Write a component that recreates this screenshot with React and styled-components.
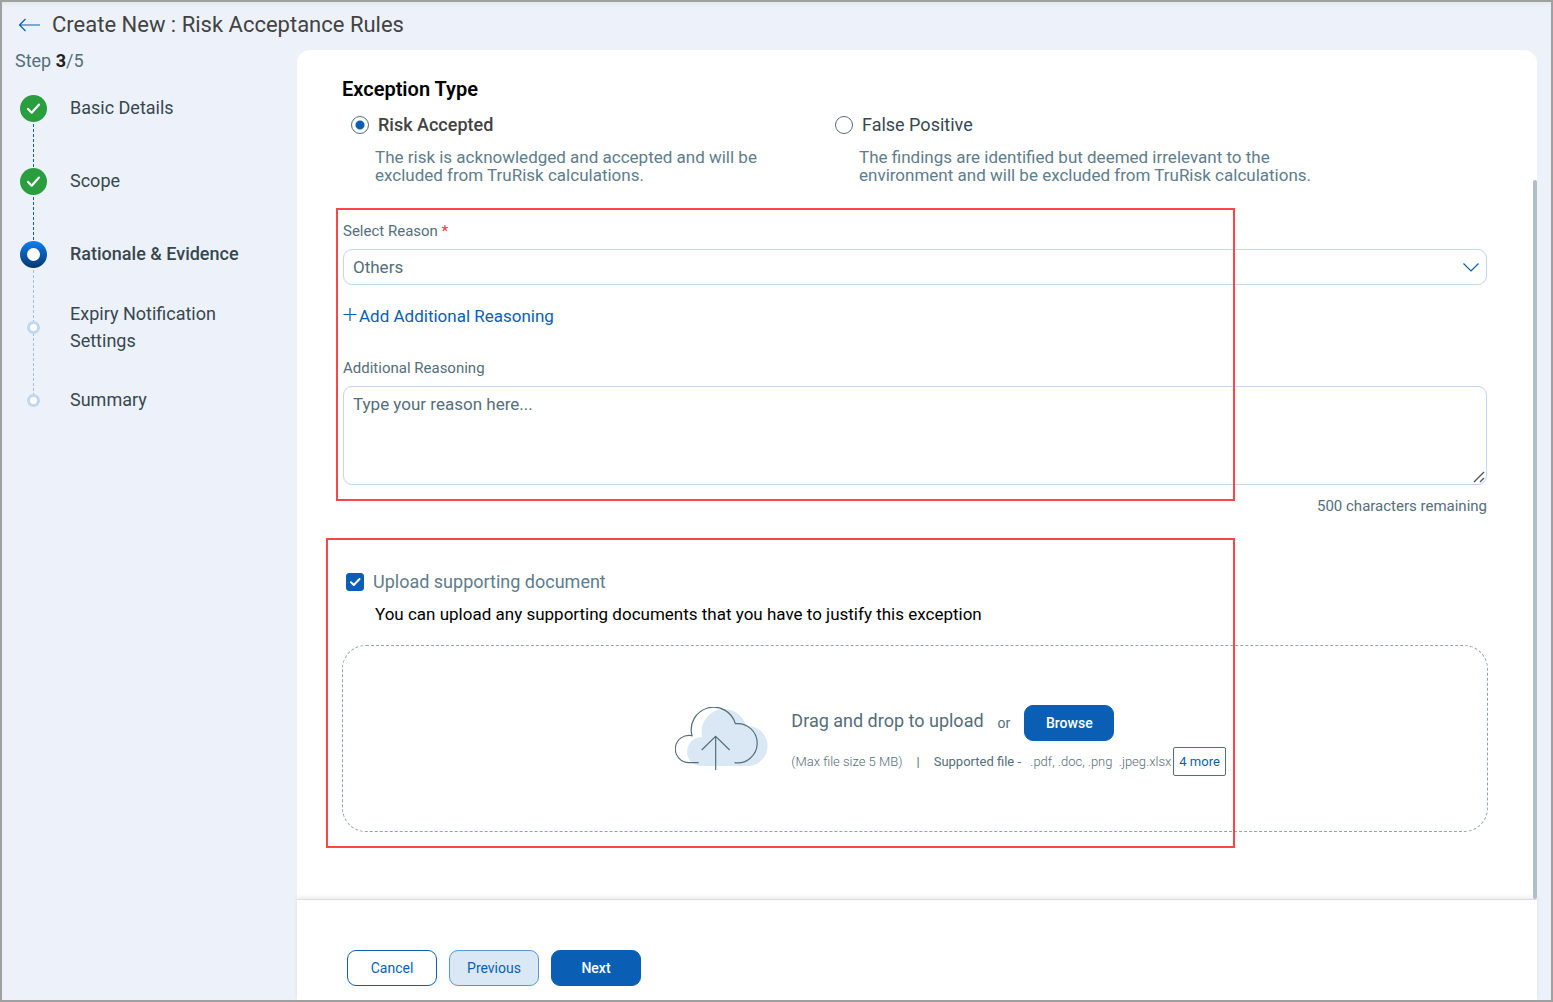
import { useState } from 'react'
import styled, { createGlobalStyle } from 'styled-components'

const colors = {
  blue: '#0a5fb4',
  paleBlue: '#dae7f4',
  line: '#c0d7ee',
  slate: '#546e7a',
  softSlate: '#607d8b',
  dark: '#37474f',
  page: '#edf2fa',
  red: '#ff4545',
}

const GlobalStyle = createGlobalStyle`
  * {
    box-sizing: border-box;
  }
  body {
    margin: 0;
    font-family: Roboto, 'Liberation Sans', sans-serif;
    background: ${colors.page};
  }
  button, input, select, textarea {
    font-family: inherit;
  }
`

const Page = styled.div`
  min-height: 100vh;
  display: flex;
  flex-direction: column;
  border: 2px solid #a0a0a0;
  background: ${colors.page};
  box-shadow: inset 0 4px 4px -2px #dfe8ea;
`

const Header = styled.header`
  height: 48px;
  padding: 0 16px 3px;
  display: flex;
  align-items: center;
  gap: 10px;
`

const BackButton = styled.button`
  display: flex;
  padding: 0;
  border: 0;
  background: none;
  cursor: pointer;
`

const Title = styled.h1`
  margin: 0;
  font-size: 22px;
  line-height: 28px;
  font-weight: 400;
  color: #424242;
`

const Body = styled.div`
  flex: 1;
  display: flex;
  padding-right: 14px;
`

const Sidebar = styled.aside`
  width: 295px;
  flex-shrink: 0;
`

const StepCount = styled.p`
  margin: 0;
  padding-left: 13px;
  font-size: 18px;
  line-height: 22px;
  color: ${colors.slate};

  strong {
    font-weight: 700;
    color: #212121;
  }
`

const Steps = styled.ol`
  margin: 0;
  padding: 23px 0 0 18px;
  list-style: none;
`

const Step = styled.li`
  position: relative;
  height: 27px;
  margin-bottom: 46px;
  display: flex;
  align-items: center;
  gap: 23px;

  &:not(:last-child)::before {
    content: '';
    position: absolute;
    left: 13px;
    top: 14px;
    height: 73px;
    border-left: 1px dashed
      ${(props) => (props.$status === 'done' ? colors.blue : '#a3bedb')};
  }
`

const Marker = styled.span`
  position: relative;
  z-index: 1;
  width: 27px;
  height: 27px;
  flex-shrink: 0;
  display: grid;
  place-items: center;
`

const StepLabel = styled.span`
  max-width: 180px;
  padding-bottom: 2px;
  font-size: 18px;
  line-height: 27px;
  font-weight: ${(props) => (props.$active ? 500 : 400)};
  color: ${colors.dark};
`

const Panel = styled.main`
  flex: 1;
  min-width: 0;
  display: flex;
  flex-direction: column;
  border-radius: 13px 13px 0 0;
  background: #fff;
`

const Content = styled.div`
  position: relative;
  flex: 1;
  padding: 27px 49px 67px 45px;
`

const ScrollThumb = styled.div`
  position: absolute;
  top: 130px;
  right: 0;
  bottom: 0;
  width: 4px;
  border-radius: 2px;
  background: #b0bec5;
`

const SectionTitle = styled.h2`
  margin: 0 0 12px;
  font-size: 20px;
  line-height: 24px;
  font-weight: 600;
  color: #000;
`

const TypeOptions = styled.div`
  display: flex;
  padding-left: 9px;
`

const TypeOption = styled.div`
  width: 484px;
`

const ChoiceLabel = styled.label`
  display: flex;
  align-items: center;
  gap: 9px;
  font-size: 18px;
  line-height: 24px;
  font-weight: ${(props) => (props.$bold ? 500 : 400)};
  color: ${(props) => props.$color || colors.dark};
`

const Radio = styled.input`
  appearance: none;
  width: 18px;
  height: 18px;
  margin: 0;
  border: 1px solid ${colors.slate};
  border-radius: 50%;
  background: #fff;

  &:checked {
    background: radial-gradient(circle, ${colors.blue} 4px, #fff 5px);
  }
`

const OptionText = styled.p`
  margin: 11px 0 0 24px;
  padding-right: ${(props) => (props.$narrow ? 60 : 0)}px;
  font-size: 17px;
  line-height: 18px;
  color: ${colors.softSlate};
`

const FormSection = styled.section`
  position: relative;
  margin-top: 24px;
  padding: 13px 1px 0;
`

const Highlight = styled.div`
  position: absolute;
  top: 0;
  bottom: ${(props) => props.$bottom}px;
  left: ${(props) => props.$left}px;
  right: 253px;
  border: 2px solid ${colors.red};
  pointer-events: none;
`

const FieldLabel = styled.label`
  display: block;
  margin-bottom: 8px;
  font-size: 15px;
  line-height: 20px;
  color: ${colors.slate};

  span {
    font-weight: 500;
    color: #f44336;
  }
`

const SelectBox = styled.div`
  position: relative;

  svg {
    position: absolute;
    right: 8px;
    top: 14px;
    pointer-events: none;
  }
`

const Select = styled.select`
  appearance: none;
  display: block;
  width: 100%;
  height: 36px;
  padding: 0 9px;
  border: 1px solid ${colors.line};
  border-radius: 9px;
  background: #fff;
  font-size: 17px;
  color: ${colors.slate};
`

const AddButton = styled.button`
  display: flex;
  align-items: center;
  gap: 2px;
  margin: 19px 0 30px;
  padding: 0;
  border: 0;
  background: none;
  font-size: 17px;
  line-height: 24px;
  color: ${colors.blue};
  cursor: pointer;
`

const TextAreaBox = styled.div`
  position: relative;

  svg {
    position: absolute;
    right: 2px;
    bottom: 2px;
    pointer-events: none;
  }
`

const TextArea = styled.textarea`
  display: block;
  width: 100%;
  height: 99px;
  padding: 7px 9px;
  border: 1px solid ${colors.line};
  border-radius: 9px;
  background: #fff;
  font-size: 17px;
  line-height: 20px;
  color: ${colors.slate};
  resize: vertical;

  &::placeholder {
    color: ${colors.slate};
  }

  &::-webkit-resizer {
    background: transparent;
  }
`

const Remaining = styled.p`
  margin: 11px 0 0;
  font-size: 15px;
  line-height: 20px;
  text-align: right;
  color: ${colors.slate};
`

const UploadSection = styled.section`
  position: relative;
  margin-top: 22px;
  padding-top: 32px;
`

const UploadChoice = styled.div`
  padding-left: 4px;
`

const CheckboxBox = styled.span`
  position: relative;
  display: flex;

  svg {
    position: absolute;
    inset: 0;
    pointer-events: none;
  }
`

const Checkbox = styled.input`
  appearance: none;
  width: 18px;
  height: 18px;
  margin: 0;
  border: 1px solid ${colors.blue};
  border-radius: 3px;

  &:checked {
    background: ${colors.blue};
  }
`

const UploadNote = styled.p`
  margin: 8px 0 19px 33px;
  font-size: 17px;
  line-height: 24px;
  color: #000;
`

const DropZone = styled.div`
  min-height: 187px;
  display: flex;
  align-items: center;
  gap: 22px;
  padding-left: 29%;
  border: 1px dashed #90a4ae;
  border-radius: 24px;
`

const UploadInfo = styled.div`
  display: flex;
  flex-direction: column;
  gap: 6px;
  padding-top: 4px;
`

const UploadRow = styled.div`
  display: flex;
  align-items: center;
  white-space: pre;
  font-size: 14px;
  line-height: 20px;
  color: ${colors.slate};
`

const FileRow = styled(UploadRow)`
  font-size: 13px;
  font-weight: 300;
`

const DropText = styled.span`
  margin-right: 14px;
  padding-bottom: 4px;
  font-size: 18px;
  line-height: 24px;
`

const SupportedLabel = styled.span`
  margin-right: 6px;
  font-weight: 400;
`

const Divider = styled.span`
  margin: 0 14px;
  font-weight: 400;
`

const MoreButton = styled.button`
  height: 29px;
  margin-left: 2px;
  padding: 0 5px;
  border: 1px solid ${colors.slate};
  border-radius: 2px;
  background: #fff;
  font-size: 13px;
  color: ${colors.blue};
  cursor: pointer;
`

const Button = styled.button`
  width: 90px;
  height: 36px;
  padding: 0;
  border: 1px solid ${colors.blue};
  border-radius: 9px;
  background: #fff;
  font-size: 14px;
  color: ${colors.blue};
  cursor: pointer;
`

const PrimaryButton = styled(Button)`
  background: ${colors.blue};
  font-weight: 500;
  color: #fff;
`

const SecondaryButton = styled(Button)`
  border-color: #5b97d0;
  background: ${colors.paleBlue};
`

const BrowseButton = styled(PrimaryButton)`
  margin-left: 14px;
`

const Footer = styled.footer`
  display: flex;
  gap: 12px;
  padding: 50px 50px 14px;
  border-top: 1px solid #dcdcdc;
  box-shadow: 0 -2px 4px rgba(0, 0, 0, 0.08);
`

const steps = [
  { label: 'Basic Details', status: 'done' },
  { label: 'Scope', status: 'done' },
  { label: 'Rationale & Evidence', status: 'active' },
  { label: 'Expiry Notification Settings', status: 'todo' },
  { label: 'Summary', status: 'todo' },
]

const exceptionTypes = [
  {
    id: 'accepted',
    label: 'Risk Accepted',
    text: 'The risk is acknowledged and accepted and will be excluded from TruRisk calculations.',
    narrow: true,
  },
  {
    id: 'false-positive',
    label: 'False Positive',
    text: 'The findings are identified but deemed irrelevant to the environment and will be excluded from TruRisk calculations.',
  },
]

const MAX_LENGTH = 500

const StepIcon = ({ status }) => {
  if (status === 'done')
    return (
      <svg width="27" height="27" viewBox="0 0 27 27" fill="none">
        <circle cx="13.5" cy="13.5" r="13.5" fill="#2a9d3f" />
        <path
          d="M8 14l3.7 3.7L19 9.6"
          stroke="#fff"
          strokeWidth="2.2"
          strokeLinecap="round"
          strokeLinejoin="round"
        />
      </svg>
    )
  if (status === 'active')
    return (
      <svg width="27" height="27" viewBox="0 0 27 27">
        <defs>
          <linearGradient id="activeStep" x1="0" y1="0" x2="0" y2="1">
            <stop offset="0" stopColor="#0d7ff2" />
            <stop offset="1" stopColor="#07366b" />
          </linearGradient>
        </defs>
        <circle cx="13.5" cy="13.5" r="13.5" fill="url(#activeStep)" />
        <circle cx="13.5" cy="13.5" r="6.5" fill="#fff" />
      </svg>
    )
  return (
    <svg width="13" height="13" viewBox="0 0 13 13">
      <circle cx="6.5" cy="6.5" r="5" fill="#fff" stroke="#c0d7ee" strokeWidth="3" />
    </svg>
  )
}

const CloudIcon = () => (
  <svg width="94" height="63" viewBox="42 51 282 189" fill="none">
    <path
      d="M117 228A42 43 0 0 1 124 142A67 67 0 0 1 255 108A60 60 0 1 1 264 228Z"
      fill={colors.paleBlue}
    />
    <g stroke={colors.slate} strokeWidth="3.6">
      <path d="M113 218H84A41 41 0 1 1 93 137A67 67 0 0 1 223 101A59 59 0 1 1 221 218" />
      <path d="M164 240V140M122 180L164 139L206 180" />
    </g>
  </svg>
)

const App = () => {
  const [type, setType] = useState('accepted')
  const [reasoning, setReasoning] = useState('')
  const [upload, setUpload] = useState(true)

  return (
    <Page>
      <GlobalStyle />
      <Header>
        <BackButton aria-label="Back">
          <svg width="24" height="16" viewBox="0 0 24 16" fill="none">
            <path
              d="M22 8H1.5M7.5 2L1.5 8L7.5 14"
              stroke={colors.blue}
              strokeWidth="1.2"
            />
          </svg>
        </BackButton>
        <Title>Create New : Risk Acceptance Rules</Title>
      </Header>
      <Body>
        <Sidebar>
          <StepCount>
            Step <strong>3</strong>/5
          </StepCount>
          <Steps>
            {steps.map(({ label, status }) => (
              <Step key={label} $status={status}>
                <Marker>
                  <StepIcon status={status} />
                </Marker>
                <StepLabel $active={status === 'active'}>{label}</StepLabel>
              </Step>
            ))}
          </Steps>
        </Sidebar>
        <Panel>
          <Content>
            <SectionTitle>Exception Type</SectionTitle>
            <TypeOptions>
              {exceptionTypes.map(({ id, label, text, narrow }) => (
                <TypeOption key={id}>
                  <ChoiceLabel
                    $bold={type === id}
                    $color={type === id ? '#424242' : colors.dark}
                  >
                    <Radio
                      type="radio"
                      name="exceptionType"
                      checked={type === id}
                      onChange={() => setType(id)}
                    />
                    {label}
                  </ChoiceLabel>
                  <OptionText $narrow={narrow}>{text}</OptionText>
                </TypeOption>
              ))}
            </TypeOptions>

            <FormSection>
              <FieldLabel htmlFor="reason">
                Select Reason <span>*</span>
              </FieldLabel>
              <SelectBox>
                <Select id="reason" defaultValue="Others">
                  <option>Others</option>
                </Select>
                <svg width="16" height="9" viewBox="0 0 16 9" fill="none">
                  <path d="M0.5 0.5L8 8L15.5 0.5" stroke={colors.blue} strokeWidth="1.2" />
                </svg>
              </SelectBox>
              <AddButton>
                <svg width="14" height="16" viewBox="0 0 14 16" fill="none">
                  <path d="M7 0V13M0.5 6.5H13.5" stroke={colors.blue} strokeWidth="1.2" />
                </svg>
                Add Additional Reasoning
              </AddButton>
              <FieldLabel htmlFor="reasoning">Additional Reasoning</FieldLabel>
              <TextAreaBox>
                <TextArea
                  id="reasoning"
                  placeholder="Type your reason here..."
                  maxLength={MAX_LENGTH}
                  value={reasoning}
                  onChange={(e) => setReasoning(e.target.value)}
                />
                <svg width="12" height="12" viewBox="0 0 12 12" fill="none">
                  <path d="M1 11L11 1M7 11L11 7" stroke="#555" strokeWidth="1.4" />
                </svg>
              </TextAreaBox>
              <Remaining>
                {MAX_LENGTH - reasoning.length} characters remaining
              </Remaining>
              <Highlight $left={-6} $bottom={15} />
            </FormSection>

            <UploadSection>
              <UploadChoice>
                <ChoiceLabel $color={colors.softSlate}>
                  <CheckboxBox>
                    <Checkbox
                      type="checkbox"
                      checked={upload}
                      onChange={(e) => setUpload(e.target.checked)}
                    />
                    <svg width="18" height="18" viewBox="0 0 18 18" fill="none">
                      <path
                        d="M5 9.2l2.8 2.8L13.5 6"
                        stroke="#fff"
                        strokeWidth="2"
                        strokeLinecap="round"
                        strokeLinejoin="round"
                      />
                    </svg>
                  </CheckboxBox>
                  Upload supporting document
                </ChoiceLabel>
              </UploadChoice>
              <UploadNote>
                You can upload any supporting documents that you have to justify
                this exception
              </UploadNote>
              <DropZone>
                <CloudIcon />
                <UploadInfo>
                  <UploadRow>
                    <DropText>Drag and drop to upload</DropText>
                    or
                    <BrowseButton>Browse</BrowseButton>
                  </UploadRow>
                  <FileRow>
                    (Max file size 5 MB)
                    <Divider>|</Divider>
                    <SupportedLabel>Supported file - </SupportedLabel>
                    {'.pdf, .doc, .png  .jpeg.xlsx'}
                    <MoreButton>4 more</MoreButton>
                  </FileRow>
                </UploadInfo>
              </DropZone>
              <Highlight $left={-16} $bottom={-16} />
            </UploadSection>
            <ScrollThumb />
          </Content>
          <Footer>
            <Button>Cancel</Button>
            <SecondaryButton>Previous</SecondaryButton>
            <PrimaryButton>Next</PrimaryButton>
          </Footer>
        </Panel>
      </Body>
    </Page>
  )
}

export default App
